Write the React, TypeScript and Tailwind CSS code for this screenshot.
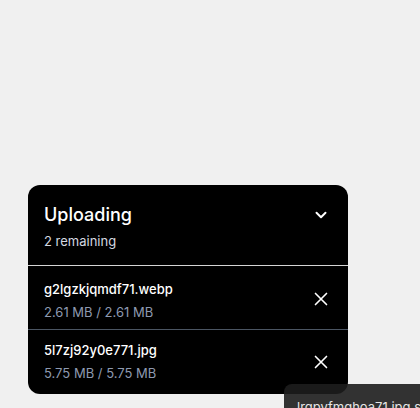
import React from "react";

const files = [
  { name: "g2lgzkjqmdf71.webp", size: "2.61 MB / 2.61 MB" },
  { name: "5l7zj92y0e771.jpg", size: "5.75 MB / 5.75 MB" },
];

function Chevron() {
  return (
    <svg width="18" height="18" viewBox="0 0 24 24" fill="none" stroke="currentColor" strokeWidth="2.6" strokeLinecap="round" strokeLinejoin="round">
      <path d="m6 9 6 6 6-6" />
    </svg>
  );
}

function XIcon() {
  return (
    <svg width="22" height="22" viewBox="0 0 24 24" fill="none" stroke="currentColor" strokeWidth="1.8" strokeLinecap="round" strokeLinejoin="round">
      <path d="M18 6 6 18M6 6l12 12" />
    </svg>
  );
}

export default function App() {
  return (
    <div
      className="relative h-[408px] w-full overflow-hidden bg-[#f0f0f0] flex flex-col justify-end pb-[14px] pl-[28px]"
      style={{ fontFamily: "Inter, 'Noto Sans', sans-serif" }}
    >
      <div className="w-[320px] rounded-xl bg-black text-white overflow-hidden">
        <div className="flex items-start justify-between pl-4 pr-[18px] pt-[16px] pb-[14px] border-b border-[#d4d4d4]">
          <div className="flex flex-col gap-[2px]">
            <div className="text-[18px] leading-[28px] font-medium text-white">Uploading</div>
            <div className="text-[13px] leading-[20px] text-[#d4d8e0]">2 remaining</div>
          </div>
          <div className="mt-[5px] text-white">
            <Chevron />
          </div>
        </div>
        <div className="flex h-16 items-center justify-between pl-4 pr-[16px] pt-[5px] border-b border-[#4b5563]">
          <div className="flex flex-col gap-[3px]">
            <div className="text-[13px] leading-[20px] font-medium text-white">{files[0].name}</div>
            <div className="text-[13px] leading-[20px] text-[#8e9ab0]">{files[0].size}</div>
          </div>
          <div className="text-white -mt-[3px]">
            <XIcon />
          </div>
        </div>
        <div className="flex h-16 items-center justify-between pl-4 pr-[16px] pb-[1px]">
          <div className="flex flex-col gap-[3px]">
            <div className="text-[13px] leading-[20px] font-medium text-white">{files[1].name}</div>
            <div className="text-[13px] leading-[20px] text-[#8e9ab0]">{files[1].size}</div>
          </div>
          <div className="text-white">
            <XIcon />
          </div>
        </div>
      </div>
      <div className="absolute left-[284px] top-[384px] w-[200px] h-[60px] rounded-lg bg-[rgba(29,29,29,0.9)] px-[13px] pt-[13px] text-[13px] leading-[20px] text-[#e5e5e5] whitespace-nowrap">
        lrgpyfmqhoa71.jpg successfully uploaded
      </div>
    </div>
  );
}
